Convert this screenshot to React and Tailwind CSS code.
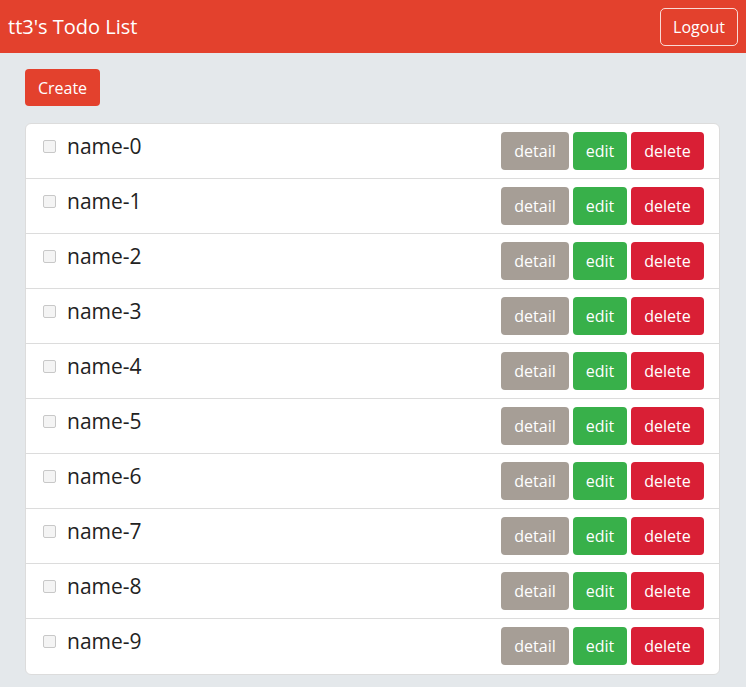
import React from "react";

const todos = Array.from({ length: 10 }, (_, i) => ({ id: i, name: `name-${i}` }));

const TodoRow = ({ todo, last }) => (
  <div
    className={`flex items-start justify-between pl-4 pr-[15px] py-2 h-[55px] ${
      last ? "" : "border-b border-[#dcdcdc]"
    }`}
  >
    <div className="flex items-start">
      <input
        type="checkbox"
        className="mt-2 ml-[1px] w-[13px] h-[13px] appearance-none border border-[#c8c8c8] rounded-[2px] bg-[#f4f4f4]"
      />
      <span className="ml-[11px] text-[21px] leading-[28px] text-[#222]">{todo.name}</span>
    </div>
    <div className="flex gap-1 text-[16px]">
      <button className="h-[38px] w-[68px] rounded-[4px] bg-[#a69e96] text-white">detail</button>
      <button className="h-[38px] w-[54px] rounded-[4px] bg-[#38b04a] text-white">edit</button>
      <button className="h-[38px] w-[73px] rounded-[4px] bg-[#d91f35] text-white">delete</button>
    </div>
  </div>
);

export default function App() {
  return (
    <div className="min-h-[687px] bg-[#e4e8eb] font-['Open_Sans',sans-serif]">
      <nav className="h-[53px] bg-[#e3412d] flex items-center justify-between pl-2 pr-2">
        <span className="text-white text-[20px]">tt3's Todo List</span>
        <button className="h-[38px] w-[78px] rounded-[5px] border border-white/80 text-white text-[16px]">
          Logout
        </button>
      </nav>
      <div className="px-[25px] pt-4 pb-4 w-[720px]">
        <button className="h-[37px] w-[75px] rounded-[4px] bg-[#e3412d] text-white text-[16px]">
          Create
        </button>
        <div className="mt-[17px] bg-white rounded-[6px] border border-[#dcdcdc] w-[695px] overflow-hidden">
          {todos.map((t, i) => (
            <TodoRow key={t.id} todo={t} last={i === todos.length - 1} />
          ))}
        </div>
      </div>
    </div>
  );
}
